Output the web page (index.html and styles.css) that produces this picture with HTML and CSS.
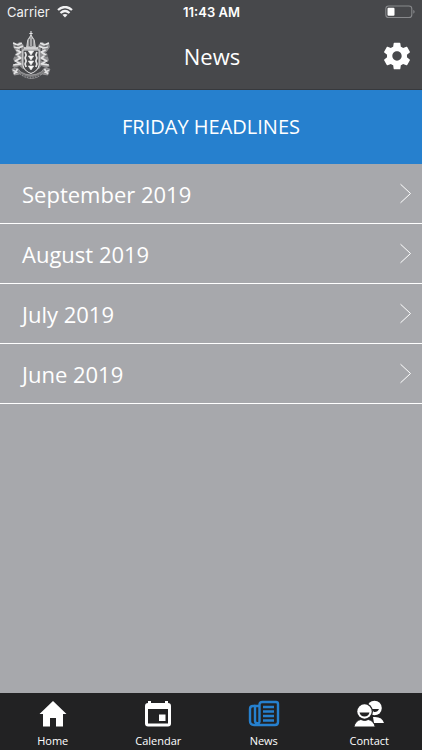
FILE: index.html
```html
<!DOCTYPE html>
<html lang="en">
<head>
<meta charset="utf-8">
<meta name="viewport" content="width=device-width, initial-scale=1">
<title>News</title>
<link rel="stylesheet" href="styles.css">
</head>
<body>
<div class="app">
  <header class="header">
    <div class="status">
      <div class="carrier">
        <span>Carrier</span>
        <svg width="16" height="12" viewBox="0 0 16 12" fill="none" stroke="currentColor" stroke-width="2.3" aria-hidden="true">
          <path d="M1 4Q8-2 15 4M3.500 7Q8 3 12.500 7"/>
          <path d="M5.400 8.800Q8 7 10.600 8.800L8 11.500Z" fill="currentColor" stroke="none"/>
        </svg>
      </div>
      <time class="time">11:43 AM</time>
      <svg class="battery" width="31" height="14" viewBox="0 0 31 14" aria-hidden="true">
        <rect x=".8" y="1" width="26" height="11.500" rx="2.800" fill="none" stroke="#88898c" stroke-width="1.100"/>
        <rect x="2.500" y="2.800" width="7" height="8" rx="1" fill="#fff"/>
        <path d="M28.300 4.800Q31 6.800 28.300 8.800Z" fill="#88898c"/>
      </svg>
    </div>
    <div class="titlebar">
      <svg class="crest" width="40" height="50" viewBox="1 0 37 50" preserveAspectRatio="none" fill="none" stroke="#e4e4e5" stroke-linejoin="round" aria-hidden="true">
        <path d="M19.500 0v6M18 2.500h3" stroke-width="1"/>
        <path d="M19.500 4l-3 5-1 7h8l-1-7Z" fill="#a5a5a7" stroke-width=".8"/>
        <path d="M18 8v7M21 8v7" stroke="#47484b" stroke-width=".8"/>
        <path d="M3 11l3 2 3-2 3 2 2 4 5-2 6 2 2-4 3-2 3 2 3-2 1 5-3 5 2 8-2 4 3 2-3 2-5-2-2 3H12l-3-3-5 2-2-2 3-2-2-5 3-7-3-5Z" fill="#8f8f91" stroke="none"/>
        <path d="M3 12l4 2 4-2M36 12l-4 2-4-2M4 16l4 1 4-2M35 16l-4 1-4-2M13 17h13" stroke-width="1.500"/>
        <path d="M6 19l4 2-4 3 4 3-5 3 5 3-7 1M33 19l-4 2 4 3-4 3 5 3-5 3 7 1" stroke-width="1.600"/>
        <path d="M5 15h2M10 17v3M29 17v3M34 15h-2M4 21l2 1M35 21l-2 1M7 25H4M32 25h3M10 29l-2 1M29 29l2 1M4 31l2 1M35 31l-2 1" stroke="#47484b" stroke-width="1.100"/>
        <path d="M12 19h15v15q-1 6-7.500 8.500Q13 40 12 34Z" fill="#47484b" stroke-width="1"/>
        <path d="M17 20h5l-2.500 4zM17 25h5l-2.500 4zM17 30h5l-2.500 4zM17 35h5l-2.500 4z" fill="#fff" stroke-width=".7"/>
        <path d="M14 21l1 3-1 3 1 3-1 3 1 3M25 21l-1 3 1 3-1 3 1 3-1 3" stroke-width="1.600"/>
        <path d="M2 38l5-1 3 4q9.500 6 19 0l3-4 5 1-2 6-5-1q-10 9-21 0l-5 1Z" fill="#7f7f81" stroke="#aaaaac" stroke-width=".7"/>
        <path d="M3 39l4 3M7 38l-3 5M36 39l-4 3M32 38l3 5" stroke-width="1.500"/>
        <path d="M10 43.500q9.500 6 19 0" stroke="#55565a" stroke-width="1.500" stroke-dasharray="1.500 1"/>
      </svg>
      <h1 class="title">News</h1>
      <button class="settings" type="button" aria-label="Settings">
        <svg width="32" height="32" viewBox="0 0 24 24" fill="currentColor" aria-hidden="true">
          <path d="M19.43 12.98c.04-.32.07-.64.07-.98s-.03-.66-.07-.98l2.110-1.650c.19-.15.24-.42.12-.64l-2-3.460c-.12-.22-.39-.3-.61-.22l-2.490 1c-.52-.4-1.080-.73-1.690-.98l-.38-2.650C14.460 2.180 14.250 2 14 2h-4c-.25 0-.46.18-.49.42l-.38 2.650c-.61.25-1.170.59-1.690.98l-2.490-1c-.23-.09-.49 0-.61.22l-2 3.460c-.13.22-.07.49.12.64l2.110 1.650c-.04.32-.07.65-.07.98s.03.66.07.98l-2.110 1.650c-.19.15-.24.42-.12.64l2 3.460c.12.22.39.3.61.22l2.490-1c.52.4 1.080.73 1.690.98l.38 2.650c.03.24.24.42.49.42h4c.25 0 .46-.18.49-.42l.38-2.650c.61-.25 1.170-.59 1.690-.98l2.490 1c.23.09.49 0 .61-.22l2-3.460c.12-.22.07-.49-.12-.64l-2.110-1.650zM12 15.500c-1.930 0-3.500-1.570-3.500-3.500s1.570-3.500 3.500-3.500 3.500 1.570 3.500 3.500-1.570 3.500-3.500 3.500z"/>
        </svg>
      </button>
    </div>
  </header>

  <main class="content">
    <h2 class="banner">FRIDAY HEADLINES</h2>
    <ul class="months">
      <li><a class="month" href="#september"><span>September 2019</span><svg class="chevron" width="13" height="21" viewBox="0 0 13 21" aria-hidden="true"><path d="M1.500 1.200L11.500 10.500 1.500 19.800"/></svg></a></li>
      <li><a class="month" href="#august"><span>August 2019</span><svg class="chevron" width="13" height="21" viewBox="0 0 13 21" aria-hidden="true"><path d="M1.500 1.200L11.500 10.500 1.500 19.800"/></svg></a></li>
      <li><a class="month" href="#july"><span>July 2019</span><svg class="chevron" width="13" height="21" viewBox="0 0 13 21" aria-hidden="true"><path d="M1.500 1.200L11.500 10.500 1.500 19.800"/></svg></a></li>
      <li><a class="month" href="#june"><span>June 2019</span><svg class="chevron" width="13" height="21" viewBox="0 0 13 21" aria-hidden="true"><path d="M1.500 1.200L11.500 10.500 1.500 19.800"/></svg></a></li>
    </ul>
  </main>

  <nav class="tabs" aria-label="Main">
    <a class="tab" href="#home">
      <svg width="32" height="28" viewBox="0 0 32 28" fill="#fff" aria-hidden="true"><path d="M16 1L29.500 14H26v12.500h-7V18h-6v8.500H6V14H2.500Z"/></svg>
      <span>Home</span>
    </a>
    <a class="tab" href="#calendar">
      <svg width="32" height="28" viewBox="0 0 32 28" aria-hidden="true"><path fill="#fff" fill-rule="evenodd" d="M6 1h3v2h14V1h3v2q3 0 3 3v17.500q0 3-3 3H6q-3 0-3-3V6q0-3 3-3ZM6 9v14.500h20V9ZM17 14.500h6.500v6.500H17Z"/></svg>
      <span>Calendar</span>
    </a>
    <a class="tab" href="#news" aria-current="page">
      <svg width="32" height="28" viewBox="0 0 32 28" fill="none" stroke="#2680ce" stroke-width="2.400" stroke-linejoin="round" aria-hidden="true">
        <path d="M11.500 22V5q0-3 3-3H28q2 0 2 2v18q0 3-3 3H6q-4 0-4-4V9q0-3 3-3h2v15q0 2.300 2.300 2.300t2.200-2.300"/>
        <path d="M11 6H6M15 7h11M15 11.500h11M15 16h11M15 20.500h11"/>
      </svg>
      <span>News</span>
    </a>
    <a class="tab" href="#contact">
      <svg width="32" height="28" viewBox="0 0 32 28" aria-hidden="true">
        <circle cx="21.500" cy="8" r="7.300" fill="#fff"/>
        <path d="M18 9h8q-1.500 3.500-5 3Z" fill="#222223"/>
        <path d="M20 17q9-1 11 6H21Z" fill="#fff"/>
        <circle cx="11.500" cy="11.500" r="8.500" fill="#222223"/>
        <circle cx="11.500" cy="11.500" r="7.200" fill="#fff"/>
        <path d="M6.500 12.500h10q-1 4-5 4t-5-4Z" fill="#222223"/>
        <path d="M.8 27q1.500-6.500 7-7.500 4 2 7.500 0 5.500 1 7 7.500Z" fill="#fff" stroke="#222223" stroke-width="1"/>
      </svg>
      <span>Contact</span>
    </a>
  </nav>
</div>
</body>
</html>
```
FILE: styles.css
```css
* {
  box-sizing: border-box;
}

body {
  margin: 0;
  font-family: "Open Sans", sans-serif;
  color: #fff;
  background: #a7a8ac;
}

a {
  color: inherit;
  text-decoration: none;
}

svg {
  display: block;
}

.app {
  min-height: 100vh;
  display: flex;
  flex-direction: column;
}

.header {
  background: #47484b;
  border-bottom: 1px solid #38393c;
}

.status {
  height: 24px;
  padding: 0 6px 0 7px;
  display: grid;
  grid-template-columns: 1fr auto 1fr;
  align-items: center;
  font: 13px/24px Inter, sans-serif;
}

.carrier {
  display: flex;
  align-items: center;
  gap: 7px;
  color: #f1f1f2;
}

.time {
  font-weight: 600;
}

.battery {
  justify-self: end;
}

.titlebar {
  height: 65px;
  padding: 0 9px 2px 11px;
  display: grid;
  grid-template-columns: 1fr auto 1fr;
  align-items: center;
}

.title {
  margin: 0;
  font-size: 22px;
  line-height: 32px;
  font-weight: 500;
}

.settings {
  justify-self: end;
  padding: 0;
  border: 0;
  background: none;
  color: #fff;
}

.content {
  flex: 1;
}

.banner {
  margin: 0;
  padding: 22px 16px;
  background: #2680ce;
  font-size: 20px;
  line-height: 30px;
  font-weight: 400;
  text-align: center;
}

.months {
  margin: 0;
  padding: 0;
  list-style: none;
}

.month {
  min-height: 60px;
  padding: 0 10px 0 22px;
  display: flex;
  align-items: center;
  justify-content: space-between;
  border-bottom: 1px solid #fff;
  font-size: 22px;
  line-height: 32px;
}

.chevron {
  fill: none;
  stroke: #fff;
  stroke-width: 1;
}

.tabs {
  padding: 7px 0 0;
  display: grid;
  grid-template-columns: repeat(4, 1fr);
  background: #222223;
}

.tab {
  display: flex;
  flex-direction: column;
  align-items: center;
  gap: 4px;
  font-size: 11px;
  line-height: 18px;
}
```
